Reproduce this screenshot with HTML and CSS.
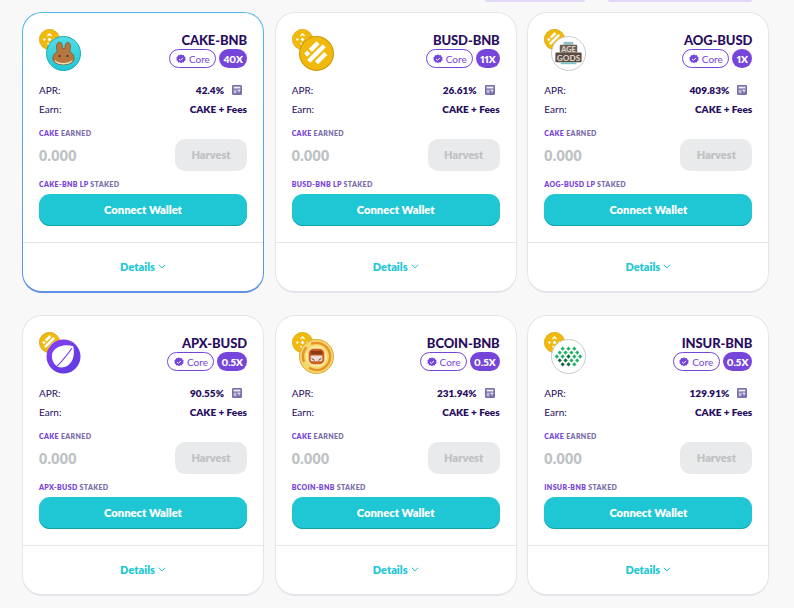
FILE: index.html
```html
<!DOCTYPE html>
<html lang="en">
<head>
<meta charset="utf-8">
<title>Farms</title>
<link rel="stylesheet" href="styles.css">
</head>
<body>
<svg class="defs" width="0" height="0" aria-hidden="true">
  <defs>
    <linearGradient id="cakeBg" x1="0" y1="0" x2="0" y2="1"><stop offset="0" stop-color="#53dee9"/><stop offset="1" stop-color="#1fc7d4"/></linearGradient>
    <linearGradient id="apxBg" x1="0" y1="0" x2="1" y2="1"><stop offset="0" stop-color="#8a3ff0"/><stop offset="1" stop-color="#5a3be0"/></linearGradient>
    <symbol id="bnb" viewBox="0 0 32 32">
      <circle cx="16" cy="16" r="15.5" fill="#f0b90b" stroke="#d9a50a"/>
      <g fill="#fff"><path d="M16 6l4 4-1.6 1.6L16 9.2l-2.4 2.4L12 10z"/><path d="M16 26l4-4-1.6-1.6-2.4 2.4-2.4-2.4L12 22z"/><path d="M6 16l2.2-2.2L10.4 16l-2.2 2.2z"/><path d="M26 16l-2.2-2.2-2.2 2.2 2.2 2.2z"/><path d="M16 13l3 3-3 3-3-3z"/></g>
    </symbol>
    <symbol id="busd" viewBox="0 0 32 32">
      <circle cx="16" cy="16" r="15.5" fill="#f0b90b" stroke="#c99b0d"/>
      <g fill="#fff" transform="rotate(45 16 16)"><rect x="8" y="8" width="4" height="10"/><rect x="8" y="20" width="4" height="4"/><rect x="14" y="6" width="4" height="20"/><rect x="20" y="10" width="4" height="12"/></g>
    </symbol>
    <symbol id="cake" viewBox="0 0 36 36">
      <circle cx="18" cy="18" r="17.5" fill="url(#cakeBg)" stroke="#18a9b5"/>
      <path d="M13.5 6.500c-2 0-2.800 2.300-2.800 5 0 2 .3 3.500.8 4.500-2.700 1.500-4.500 4-4.500 7 0 4.500 4.800 6.500 10.900 6.500s11-2 11-6.500c0-3-1.800-5.500-4.500-7 .5-1 .8-2.500.8-4.500 0-2.700-.8-5-2.800-5s-3 2.500-3 6.300c-.8-.1-1.600-.1-2.400 0 0-3.800-1-6.300-2.500-6.300z" fill="#b5763f" stroke="#7a4a20" stroke-width=".6"/>
      <path d="M8.500 24.500c2.500 2.500 5.800 3.300 9.400 3.300s7-.8 9.500-3.300c-.5 3-4.500 4.700-9.500 4.700s-8.900-1.700-9.400-4.700z" fill="#f7e3b5"/>
      <circle cx="14" cy="20.500" r="1" fill="#452a12"/><circle cx="22" cy="20.500" r="1" fill="#452a12"/>
    </symbol>
    <symbol id="aog" viewBox="0 0 36 36">
      <circle cx="18" cy="18" r="17.500" fill="#fff" stroke="#c8c8c8"/>
      <rect x="13" y="6" width="10" height="3" fill="#8fc0c8"/>
      <rect x="9" y="9" width="18" height="8" rx="1" fill="#6f5e50"/>
      <rect x="4.500" y="17" width="27" height="10" rx="1" fill="#5c4a3e"/>
      <text x="18" y="16" class="aog-text">AGE</text>
      <text x="18" y="25.500" class="aog-text aog-big">GODS</text>
      <rect x="10" y="27" width="16" height="2" fill="#7cc0c8"/>
    </symbol>
    <symbol id="apx" viewBox="0 0 36 36">
      <circle cx="18" cy="18" r="17.500" fill="url(#apxBg)"/>
      <path d="M28 7.500C21 5 10 6.500 6.500 14.500 5 20 7.500 26 12 28.500c6 2.500 13-1.500 15.500-8 1.500-4 1.500-9 .5-13z" fill="#fff"/>
      <path d="M26.500 9.500C23 15 18 21 11.500 28" fill="none" stroke="#7a3ee8" stroke-width="1.200"/>
    </symbol>
    <symbol id="bcoin" viewBox="0 0 36 36">
      <circle cx="18" cy="18" r="17.500" fill="#f6d868" stroke="#d9a635"/>
      <circle cx="18" cy="18" r="14" fill="none" stroke="#e8922c" stroke-width="2.500" stroke-dasharray="30 8 16 6"/>
      <circle cx="18" cy="18" r="11" fill="#f8e8a0"/>
      <rect x="10" y="10" width="16" height="16" rx="5" fill="#cf5f22"/>
      <rect x="12" y="12" width="12" height="4" rx="1" fill="#8c3a14"/>
      <rect x="12" y="17" width="12" height="6" rx="1.500" fill="#e8e0d8"/>
      <path d="M13 20l3 2M23 20l-3 2" stroke="#7a3015"/>
    </symbol>
    <symbol id="insur" viewBox="0 0 36 36">
      <circle cx="18" cy="18" r="17.500" fill="#fff" stroke="#c8c8c8"/>
      <path fill="#25b36a" d="M12 7.800l2.200 2.200-2.200 2.200-2.200-2.200zM18 7.800l2.200 2.200-2.200 2.200-2.200-2.200zM24 7.800l2.200 2.200-2.200 2.200-2.200-2.200zM9 11.800l2.200 2.200-2.200 2.200-2.200-2.200zM15 11.800l2.200 2.200-2.200 2.200-2.200-2.200zM21 11.800l2.200 2.200-2.200 2.200-2.200-2.200zM27 11.800l2.200 2.200-2.200 2.200-2.200-2.200zM6 15.800l2.200 2.200-2.200 2.200-2.200-2.200zM12 15.800l2.200 2.200-2.200 2.200-2.200-2.200zM24 15.800l2.200 2.200-2.200 2.200-2.200-2.200zM30 15.800l2.200 2.200-2.200 2.200-2.200-2.200zM21 19.800l2.200 2.200-2.200 2.200-2.200-2.200zM27 19.800l2.200 2.200-2.200 2.200-2.200-2.200zM24 23.800l2.200 2.200-2.200 2.200-2.200-2.200z"/>
      <path fill="#146b45" d="M18 15.800l2.200 2.200-2.200 2.200-2.200-2.200zM9 19.800l2.200 2.200-2.200 2.200-2.200-2.200zM15 19.800l2.200 2.200-2.200 2.200-2.200-2.200zM12 23.800l2.200 2.200-2.200 2.200-2.200-2.200zM18 23.800l2.200 2.200-2.200 2.200-2.200-2.200z"/>
    </symbol>
    <symbol id="verified" viewBox="0 0 12 12">
      <path d="M6 .4l1.500 1 1.800-.2.700 1.700 1.500 1-.4 1.800.4 1.800-1.500 1-.7 1.700-1.800-.2-1.500 1-1.500-1-1.800.2-.7-1.700-1.500-1 .4-1.800-.4-1.800 1.500-1 .7-1.700 1.800.2z" fill="#7645d9"/>
      <path d="M3.700 6.100l1.600 1.600 3-3" fill="none" stroke="#fff" stroke-width="1.200"/>
    </symbol>
    <symbol id="calc" viewBox="0 0 11 11">
      <rect width="11" height="11" rx="1.500" fill="#7a6eaa"/>
      <rect x="1.800" y="1.800" width="7.400" height="2" fill="#fff" opacity=".9"/>
      <path d="M1.800 5h3.200v4.200H1.800z" fill="#b9b2d3"/>
      <path d="M6 5h3.200v1.500H6z" fill="#e6e3f0"/>
      <path d="M6.800 7.200h2v.8h-2zM2.600 6.800h1.600v.7H2.600z" fill="#fff"/>
    </symbol>
    <symbol id="chevron" viewBox="0 0 8 5">
      <path d="M.8.8L4 3.800 7.200.8" fill="none" stroke="#1fc7d4" stroke-width="1"/>
    </symbol>
  </defs>
</svg>

<div class="top-strip">
  <span class="tab-edge tab-a"></span>
  <span class="tab-edge tab-b"></span>
</div>

<main class="farms">

  <article class="card card-active">
    <div class="body">
      <header class="head">
        <div class="pair"><svg class="coin-small"><use href="#bnb"/></svg><svg class="coin-big"><use href="#cake"/></svg></div>
        <div class="title-block">
          <h2 class="title">CAKE-BNB</h2>
          <div class="tags"><span class="tag-core"><svg class="check"><use href="#verified"/></svg>Core</span><span class="tag-mult">40X</span></div>
        </div>
      </header>
      <div class="row row-apr"><span class="label">APR:</span><span class="value">42.4%<svg class="calc"><use href="#calc"/></svg></span></div>
      <div class="row row-earn"><span class="label">Earn:</span><span class="value">CAKE + Fees</span></div>
      <p class="caption caption-earned"><span class="accent">CAKE</span> EARNED</p>
      <div class="harvest-row"><span class="amount">0.000</span><button class="harvest">Harvest</button></div>
      <p class="caption caption-staked"><span class="accent">CAKE-BNB LP</span> STAKED</p>
      <button class="connect">Connect Wallet</button>
    </div>
    <footer class="details"><span>Details</span><svg class="chev"><use href="#chevron"/></svg></footer>
  </article>

  <article class="card">
    <div class="body">
      <header class="head">
        <div class="pair"><svg class="coin-small"><use href="#bnb"/></svg><svg class="coin-big"><use href="#busd"/></svg></div>
        <div class="title-block">
          <h2 class="title">BUSD-BNB</h2>
          <div class="tags"><span class="tag-core"><svg class="check"><use href="#verified"/></svg>Core</span><span class="tag-mult">11X</span></div>
        </div>
      </header>
      <div class="row row-apr"><span class="label">APR:</span><span class="value">26.61%<svg class="calc"><use href="#calc"/></svg></span></div>
      <div class="row row-earn"><span class="label">Earn:</span><span class="value">CAKE + Fees</span></div>
      <p class="caption caption-earned"><span class="accent">CAKE</span> EARNED</p>
      <div class="harvest-row"><span class="amount">0.000</span><button class="harvest">Harvest</button></div>
      <p class="caption caption-staked"><span class="accent">BUSD-BNB LP</span> STAKED</p>
      <button class="connect">Connect Wallet</button>
    </div>
    <footer class="details"><span>Details</span><svg class="chev"><use href="#chevron"/></svg></footer>
  </article>

  <article class="card">
    <div class="body">
      <header class="head">
        <div class="pair"><svg class="coin-small"><use href="#busd"/></svg><svg class="coin-big"><use href="#aog"/></svg></div>
        <div class="title-block">
          <h2 class="title">AOG-BUSD</h2>
          <div class="tags"><span class="tag-core"><svg class="check"><use href="#verified"/></svg>Core</span><span class="tag-mult">1X</span></div>
        </div>
      </header>
      <div class="row row-apr"><span class="label">APR:</span><span class="value">409.83%<svg class="calc"><use href="#calc"/></svg></span></div>
      <div class="row row-earn"><span class="label">Earn:</span><span class="value">CAKE + Fees</span></div>
      <p class="caption caption-earned"><span class="accent">CAKE</span> EARNED</p>
      <div class="harvest-row"><span class="amount">0.000</span><button class="harvest">Harvest</button></div>
      <p class="caption caption-staked"><span class="accent">AOG-BUSD LP</span> STAKED</p>
      <button class="connect">Connect Wallet</button>
    </div>
    <footer class="details"><span>Details</span><svg class="chev"><use href="#chevron"/></svg></footer>
  </article>

  <article class="card">
    <div class="body">
      <header class="head">
        <div class="pair"><svg class="coin-small"><use href="#busd"/></svg><svg class="coin-big"><use href="#apx"/></svg></div>
        <div class="title-block">
          <h2 class="title">APX-BUSD</h2>
          <div class="tags"><span class="tag-core"><svg class="check"><use href="#verified"/></svg>Core</span><span class="tag-mult">0.5X</span></div>
        </div>
      </header>
      <div class="row row-apr"><span class="label">APR:</span><span class="value">90.55%<svg class="calc"><use href="#calc"/></svg></span></div>
      <div class="row row-earn"><span class="label">Earn:</span><span class="value">CAKE + Fees</span></div>
      <p class="caption caption-earned"><span class="accent">CAKE</span> EARNED</p>
      <div class="harvest-row"><span class="amount">0.000</span><button class="harvest">Harvest</button></div>
      <p class="caption caption-staked"><span class="accent">APX-BUSD</span> STAKED</p>
      <button class="connect">Connect Wallet</button>
    </div>
    <footer class="details"><span>Details</span><svg class="chev"><use href="#chevron"/></svg></footer>
  </article>

  <article class="card">
    <div class="body">
      <header class="head">
        <div class="pair"><svg class="coin-small"><use href="#bnb"/></svg><svg class="coin-big"><use href="#bcoin"/></svg></div>
        <div class="title-block">
          <h2 class="title">BCOIN-BNB</h2>
          <div class="tags"><span class="tag-core"><svg class="check"><use href="#verified"/></svg>Core</span><span class="tag-mult">0.5X</span></div>
        </div>
      </header>
      <div class="row row-apr"><span class="label">APR:</span><span class="value">231.94%<svg class="calc"><use href="#calc"/></svg></span></div>
      <div class="row row-earn"><span class="label">Earn:</span><span class="value">CAKE + Fees</span></div>
      <p class="caption caption-earned"><span class="accent">CAKE</span> EARNED</p>
      <div class="harvest-row"><span class="amount">0.000</span><button class="harvest">Harvest</button></div>
      <p class="caption caption-staked"><span class="accent">BCOIN-BNB</span> STAKED</p>
      <button class="connect">Connect Wallet</button>
    </div>
    <footer class="details"><span>Details</span><svg class="chev"><use href="#chevron"/></svg></footer>
  </article>

  <article class="card">
    <div class="body">
      <header class="head">
        <div class="pair"><svg class="coin-small"><use href="#bnb"/></svg><svg class="coin-big"><use href="#insur"/></svg></div>
        <div class="title-block">
          <h2 class="title">INSUR-BNB</h2>
          <div class="tags"><span class="tag-core"><svg class="check"><use href="#verified"/></svg>Core</span><span class="tag-mult">0.5X</span></div>
        </div>
      </header>
      <div class="row row-apr"><span class="label">APR:</span><span class="value">129.91%<svg class="calc"><use href="#calc"/></svg></span></div>
      <div class="row row-earn"><span class="label">Earn:</span><span class="value">CAKE + Fees</span></div>
      <p class="caption caption-earned"><span class="accent">CAKE</span> EARNED</p>
      <div class="harvest-row"><span class="amount">0.000</span><button class="harvest">Harvest</button></div>
      <p class="caption caption-staked"><span class="accent">INSUR-BNB</span> STAKED</p>
      <button class="connect">Connect Wallet</button>
    </div>
    <footer class="details"><span>Details</span><svg class="chev"><use href="#chevron"/></svg></footer>
  </article>

</main>
</body>
</html>
```
FILE: styles.css
```css
* { box-sizing: border-box; }

html, body { margin: 0; height: 100%; }

body {
  background: #f8f8f9;
  color: #280d5f;
  font-family: "Lato", "Noto Sans", sans-serif;
  overflow: hidden;
}

.defs { display: block; height: 0; width: 0; }

.top-strip {
  display: flex;
  height: 1px;
  padding-left: 485px;
  gap: 23px;
}

.tab-edge { display: block; height: 2px; background: #e4d8f7; border-radius: 0 0 4px 4px; }
.tab-a { width: 100px; }
.tab-b { width: 144px; }

.farms {
  display: grid;
  grid-template-columns: repeat(3, 242px);
  grid-auto-rows: 281px;
  column-gap: 10.670px;
  row-gap: 22px;
  padding: 11px 0 0 22px;
}

.card {
  display: flex;
  flex-direction: column;
  background: #fff;
  border: 1px solid #e7e3eb;
  border-bottom-width: 2px;
  border-radius: 20px;
}

.card-active {
  border: 1px solid transparent;
  border-bottom-width: 2px;
  background:
    linear-gradient(#fff, #fff) padding-box,
    linear-gradient(180deg, #53b8e8 0%, #6090e6 100%) border-box;
}

.body { flex: 0 0 229px; padding: 16px 16px 0; }

.head { display: flex; justify-content: space-between; height: 42px; }

.pair { position: relative; width: 44px; height: 42px; }
.coin-small { position: absolute; left: 0; width: 21px; height: 21px; }
.coin-big { position: absolute; left: 7px; top: 7px; width: 35px; height: 35px; }

.title-block { display: flex; flex-direction: column; align-items: flex-end; }

.title {
  margin: 5px 0 3px;
  font-size: 13px;
  line-height: 12px;
  font-weight: 900;
  letter-spacing: -.1px;
}

.tags { display: flex; gap: 3px; }

.tag-core, .tag-mult {
  display: flex;
  align-items: center;
  justify-content: center;
  height: 19px;
  border-radius: 10px;
  font-size: 10px;
}

.tag-core {
  width: 47px;
  gap: 3px;
  border: 1px solid #7645d9;
  color: #7645d9;
}

.tag-mult {
  min-width: 20px;
  padding: 0 4px;
  background: #7645d9;
  color: #fff;
  font-weight: 800;
  font-feature-settings: "pnum";
}

.check { width: 10px; height: 10px; }

.row { display: flex; justify-content: space-between; align-items: center; height: 14px; font-size: 10px; }
.row-apr { margin-top: 12px; }
.row-earn { margin-top: 5px; }

.label { font-weight: 400; }
.value { display: flex; align-items: center; font-weight: 800; }
.calc { width: 10px; height: 10px; margin-left: 8px; margin-right: 5px; }

.caption {
  margin: 0;
  height: 10px;
  line-height: 10px;
  font-size: 7px;
  font-weight: 800;
  letter-spacing: .35px;
  color: #7a6eaa;
}

.caption-earned { margin-top: 12px; }
.caption-staked { margin-top: 8px; }
.accent { color: #7645d9; }

.harvest-row { display: flex; justify-content: space-between; align-items: center; margin-top: 1px; }

.amount { font-size: 14px; font-weight: 800; color: #bdc2c4; letter-spacing: .4px; }

.harvest {
  width: 72px;
  height: 32px;
  padding: 0 0 2px;
  border: 0;
  border-radius: 10px;
  background: #e9eaeb;
  color: #bdc2c4;
  font: 800 11px "Lato", sans-serif;
}

.connect {
  display: block;
  width: 100%;
  height: 32px;
  margin-top: 5px;
  padding: 0 0 2px;
  border: 0;
  border-radius: 11px;
  background: #1fc7d4;
  box-shadow: inset 0 -1px 0 #16a0ab;
  color: #fff;
  font: 800 11.200px "Lato", sans-serif;
}

.details {
  flex: 1;
  display: flex;
  align-items: center;
  justify-content: center;
  gap: 3px;
  padding-bottom: 2px;
  border-top: 1px solid #e7e3eb;
  color: #1fc7d4;
  font-size: 11px;
  font-weight: 800;
}

.chev { width: 8px; height: 5px; }

.aog-text { font: 900 7.500px "Lato", sans-serif; fill: #d8d4cc; text-anchor: middle; }
.aog-big { font-size: 8.500px; }
```
